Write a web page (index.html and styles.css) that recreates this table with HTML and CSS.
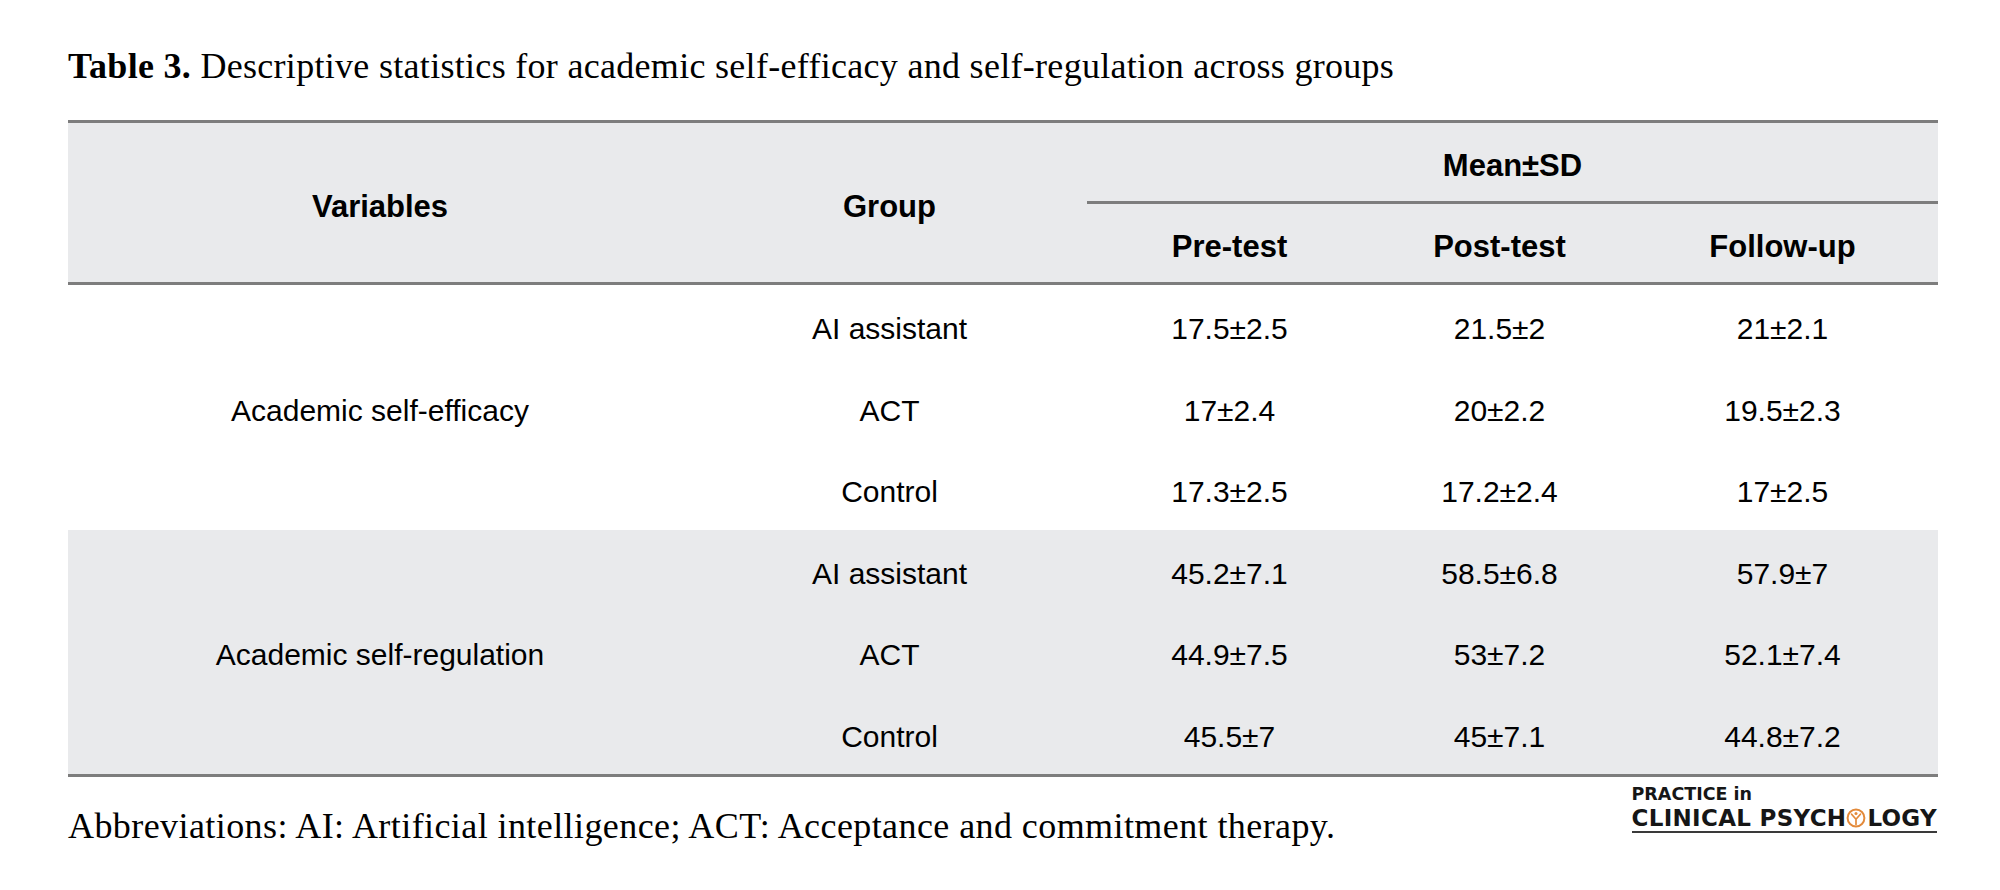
FILE: index.html
```html
<!DOCTYPE html>
<html lang="en">
<head>
<meta charset="utf-8">
<title>Table 3</title>
<link rel="stylesheet" href="styles.css">
</head>
<body>
<div class="page">
  <p class="caption"><b>Table 3.</b> Descriptive statistics for academic self-efficacy and self-regulation across groups</p>
  <div class="table-wrap">
    <table class="stats">
      <colgroup>
        <col class="c-var"><col class="c-group"><col class="c-pre"><col class="c-post"><col class="c-follow">
      </colgroup>
      <thead>
        <tr class="h1">
          <th rowspan="2" class="span">Variables</th>
          <th rowspan="2" class="span">Group</th>
          <th colspan="3" class="mean">Mean±SD</th>
        </tr>
        <tr class="h2">
          <th>Pre-test</th>
          <th>Post-test</th>
          <th>Follow-up</th>
        </tr>
      </thead>
      <tbody class="g1">
        <tr><td rowspan="3">Academic self-efficacy</td><td>AI assistant</td><td>17.5±2.5</td><td>21.5±2</td><td>21±2.1</td></tr>
        <tr><td>ACT</td><td>17±2.4</td><td>20±2.2</td><td>19.5±2.3</td></tr>
        <tr><td>Control</td><td>17.3±2.5</td><td>17.2±2.4</td><td>17±2.5</td></tr>
      </tbody>
      <tbody class="g2">
        <tr><td rowspan="3">Academic self-regulation</td><td>AI assistant</td><td>45.2±7.1</td><td>58.5±6.8</td><td>57.9±7</td></tr>
        <tr><td>ACT</td><td>44.9±7.5</td><td>53±7.2</td><td>52.1±7.4</td></tr>
        <tr><td>Control</td><td>45.5±7</td><td>45±7.1</td><td>44.8±7.2</td></tr>
      </tbody>
    </table>
  </div>
  <div class="footer">
    <p class="note">Abbreviations: AI: Artificial intelligence; ACT: Acceptance and commitment therapy.</p>
    <div class="logo">
      <div class="l1">PRACTICE in</div>
      <div class="l2">CLINICAL PSYCH<svg class="emblem" viewBox="0 0 20 20" width="20" height="20" aria-hidden="true"><circle cx="10" cy="10" r="8.4" fill="none" stroke="#e38a3a" stroke-width="2"/><circle cx="10" cy="5.4" r="1.5" fill="#e38a3a"/><path d="M5.6 6.2 L10 11.2 L14.4 6.2 M10 11.2 V16.5" fill="none" stroke="#e38a3a" stroke-width="1.7" stroke-linecap="round" stroke-linejoin="round"/></svg>LOGY</div>
    </div>
  </div>
</div>
</body>
</html>
```

FILE: styles.css
```css
html, body {
  margin: 0;
  padding: 0;
  background: #ffffff;
}

.page {
  width: 1870px;
  padding: 46px 0 0 68px;
  color: #111;
}

.caption {
  margin: 0 0 34px;
  font-family: "Liberation Serif", "Times New Roman", serif;
  font-size: 36px;
  line-height: 40px;
  letter-spacing: 0.3px;
  white-space: nowrap;
  color: #000;
}

.caption b {
  font-weight: bold;
}

.table-wrap {
  border-top: 3px solid #7d7d7d;
  border-bottom: 3px solid #7d7d7d;
}

.stats {
  width: 100%;
  table-layout: fixed;
  border-collapse: separate;
  border-spacing: 0;
  font-family: "Liberation Sans", Arial, sans-serif;
  color: #000;
}

.c-var { width: 624px; }
.c-group { width: 395px; }
.c-pre { width: 285px; }
.c-post { width: 255px; }
.c-follow { width: 311px; }

.stats th {
  background: #e9eaec;
  font-size: 31px;
  font-weight: bold;
  line-height: normal;
  text-align: center;
  vertical-align: middle;
  padding: 8px 0 0;
}

.stats .h1 { height: 81px; }
.stats .h2 { height: 81px; }

.stats .mean {
  border-bottom: 3px solid #7d7d7d;
}

.stats .h2 th,
.stats .span {
  border-bottom: 3px solid #7d7d7d;
}

.stats td {
  font-size: 30px;
  line-height: normal;
  text-align: center;
  vertical-align: middle;
  padding: 7px 0 0;
}

.stats tbody tr { height: 81.5px; }

.stats .g2 td {
  background: #e9eaec;
}

.footer {
  display: flex;
  justify-content: space-between;
  align-items: flex-start;
  margin-top: 7px;
}

.note {
  margin: 22px 0 0;
  font-family: "Liberation Serif", "Times New Roman", serif;
  font-size: 36px;
  line-height: 40px;
  letter-spacing: 0.42px;
  color: #000;
  white-space: nowrap;
}

.logo {
  font-family: "DejaVu Sans", Verdana, sans-serif;
  font-weight: bold;
  color: #161616;
  border-bottom: 2px solid #3a3a3a;
  margin-right: 1px;
}

.logo .l1 {
  font-size: 17.5px;
  line-height: 21px;
  white-space: nowrap;
}

.logo .l2 {
  font-size: 23px;
  line-height: 26px;
  letter-spacing: 0.3px;
  white-space: nowrap;
}

.emblem {
  vertical-align: -2px;
  margin: 0 1px 0 0;
}
```
